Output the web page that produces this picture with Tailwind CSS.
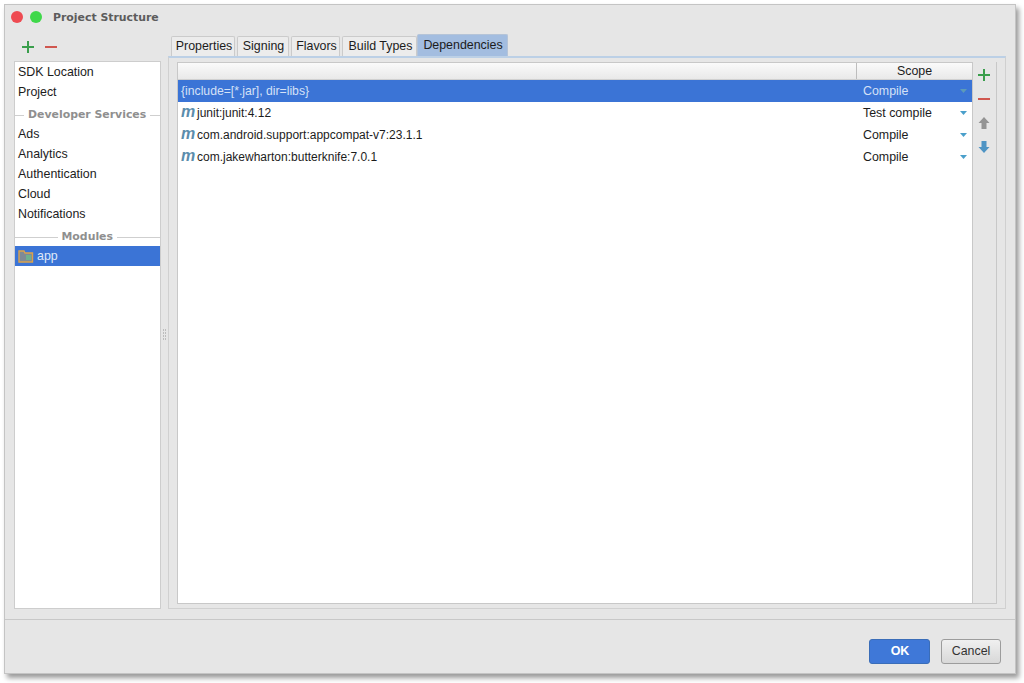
<html>
  <head>
    <meta charset="utf-8" />
    <script src="https://cdn.jsdelivr.net/npm/@tailwindcss/browser@4"></script>
  </head>
  <body class="bg-white font-['Liberation_Sans',sans-serif] text-[12.4px] text-[#1c1c1c] overflow-hidden">
    <div class="ml-[4px] mt-[4px] w-[1012px] h-[670px] flex flex-col bg-[#e6e6e6] border border-[#c4c4c4] shadow-[3px_4px_5px_rgba(0,0,0,0.4)]">
      <!-- title bar -->
      <div class="h-[23px] flex items-center pl-[6px] shrink-0">
        <div class="w-[12px] h-[12px] rounded-full bg-[#ee4b52]"></div>
        <div class="w-[12px] h-[12px] rounded-full bg-[#3fd84a] ml-[7px]"></div>
        <div class="ml-[11px] mt-[3px] font-['DejaVu_Sans',sans-serif] font-bold text-[10.9px] text-[#5c5c5c]">Project Structure</div>
      </div>

      <div class="flex flex-1 min-h-0 border-b border-[#c8c8c8]">
        <!-- left column -->
        <div class="w-[156px] pl-[9px] shrink-0 flex flex-col">
          <div class="h-[33px] flex items-center pl-[7px] gap-[9px] shrink-0 pt-[4px]">
            <svg width="14" height="14" viewBox="0 0 14 14"><path d="M7 1v12M1 7h12" stroke="#3a9e4c" stroke-width="2" /></svg>
            <svg width="14" height="14" viewBox="0 0 14 14"><path d="M1 7h12" stroke="#d0574f" stroke-width="2" /></svg>
          </div>
          <div class="w-[147px] h-[548px] bg-white border border-[#cdcdcd] flex flex-col pt-[0px]">
            <div class="h-[20px] flex items-center pl-[3px]">SDK Location</div>
            <div class="h-[20px] flex items-center pl-[3px]">Project</div>
            <div class="h-[22px] flex items-center gap-[2px] pt-[4px]">
              <div class="w-[9px] h-[1px] bg-[#cfcfcf]"></div>
              <div class="px-[2px] font-['DejaVu_Sans',sans-serif] font-bold text-[10.9px] text-[#8f8f8f] whitespace-nowrap">Developer Services</div>
              <div class="flex-1 h-[1px] bg-[#cfcfcf]"></div>
            </div>
            <div class="h-[20px] flex items-center pl-[3px]">Ads</div>
            <div class="h-[20px] flex items-center pl-[3px]">Analytics</div>
            <div class="h-[20px] flex items-center pl-[3px]">Authentication</div>
            <div class="h-[20px] flex items-center pl-[3px]">Cloud</div>
            <div class="h-[20px] flex items-center pl-[3px]">Notifications</div>
            <div class="h-[22px] flex items-center gap-[2px] pt-[5px]">
              <div class="flex-1 h-[1px] bg-[#cfcfcf]"></div>
              <div class="px-[2px] font-['DejaVu_Sans',sans-serif] font-bold text-[10.9px] text-[#8f8f8f]">Modules</div>
              <div class="w-[43px] h-[1px] bg-[#cfcfcf]"></div>
            </div>
            <div class="h-[20px] flex items-center pl-[3px] bg-[#3b74d6] text-[#dfe8f8]">
              <svg width="16" height="14" viewBox="0 0 16 14" class="mr-[3px]">
                <path d="M1 2h5l1 2h7.500v9H1z" fill="#7f8a96" stroke="#dba24c" stroke-width="1.400" />
                <rect x="8" y="6" width="5" height="5" fill="#6fb08f" />
              </svg>
              app
            </div>
          </div>
        </div>

        <!-- splitter -->
        <div class="w-[7px] shrink-0 flex items-center justify-center">
          <div class="grid grid-cols-2 gap-[1px] mt-[22px]">
            <div class="w-[1px] h-[2px] bg-[#bcbcbc]"></div><div class="w-[1px] h-[2px] bg-[#bcbcbc]"></div>
            <div class="w-[1px] h-[2px] bg-[#bcbcbc]"></div><div class="w-[1px] h-[2px] bg-[#bcbcbc]"></div>
            <div class="w-[1px] h-[2px] bg-[#bcbcbc]"></div><div class="w-[1px] h-[2px] bg-[#bcbcbc]"></div>
            <div class="w-[1px] h-[2px] bg-[#bcbcbc]"></div><div class="w-[1px] h-[2px] bg-[#bcbcbc]"></div>
          </div>
        </div>

        <!-- right column -->
        <div class="w-[838px] shrink-0 flex flex-col pt-[6px]">
          <div class="h-[22px] flex items-end pl-[3px] shrink-0">
            <div class="w-[64px] h-[20px] pl-[2px] bg-[#ececec] border border-b-0 border-[#cbcbcb] rounded-t-[2px] flex items-center justify-center">Properties</div>
            <div class="w-[52px] h-[20px] pl-[1px] ml-[2px] bg-[#ececec] border border-b-0 border-[#cbcbcb] rounded-t-[2px] flex items-center justify-center">Signing</div>
            <div class="w-[49px] h-[20px] pl-[2px] ml-[2px] bg-[#ececec] border border-b-0 border-[#cbcbcb] rounded-t-[2px] flex items-center justify-center">Flavors</div>
            <div class="w-[75px] h-[20px] pl-[2px] ml-[2px] bg-[#ececec] border border-b-0 border-[#cbcbcb] rounded-t-[2px] flex items-center justify-center">Build Types</div>
            <div class="w-[91px] h-[22px] pl-[1px] pb-[1px] bg-[#a3bde0] border border-b-0 border-[#b5c4d8] rounded-t-[2px] flex items-center justify-center">Dependencies</div>
          </div>
          <div class="w-[838px] h-[553px] border border-[#d0d0d0] border-t-2 border-t-[#bcd0e6] pl-[8px] pt-[4px] flex flex-col">
            <div class="w-[820px] h-[542px] flex border border-[#c8c8c8] border-l-0 border-t-0">
              <!-- table -->
              <div class="w-[796px] h-[541px] bg-white border border-[#c8c8c8] border-b-0 flex flex-col shrink-0">
                <div class="h-[17px] flex shrink-0 bg-gradient-to-b from-[#fafafa] to-[#e9e9e9] border-b border-[#d0d0d0]">
                  <div class="w-[679px] border-r border-[#bdbdbd]"></div>
                  <div class="flex-1 flex items-center justify-center">Scope</div>
                </div>
                <div class="h-[22px] flex items-center bg-[#3b74d6] text-[#d5e1f6]">
                  <div class="w-[679px] pl-[3px] text-[12.2px]">{include=[*.jar], dir=libs}</div>
                  <div class="pl-[6px] flex-1">Compile</div>
                  <svg width="7" height="4" viewBox="0 0 7 4" class="mr-[5px]"><path d="M0 0h7L3.500 4z" fill="#5d9ab8" /></svg>
                </div>
                <div class="h-[22px] flex items-center">
                  <div class="w-[679px] pl-[3px] flex items-center text-[12px]">
                    <span class="italic font-bold text-[16px] leading-none text-[#5b8dac] w-[16px] -mt-[3px]">m</span>
                    <span>junit:junit:4.12</span>
                  </div>
                  <div class="pl-[6px] flex-1">Test compile</div>
                  <svg width="7" height="4" viewBox="0 0 7 4" class="mr-[5px]"><path d="M0 0h7L3.500 4z" fill="#4a9fcb" /></svg>
                </div>
                <div class="h-[22px] flex items-center">
                  <div class="w-[679px] pl-[3px] flex items-center text-[12px]">
                    <span class="italic font-bold text-[16px] leading-none text-[#5b8dac] w-[16px] -mt-[3px]">m</span>
                    <span>com.android.support:appcompat-v7:23.1.1</span>
                  </div>
                  <div class="pl-[6px] flex-1">Compile</div>
                  <svg width="7" height="4" viewBox="0 0 7 4" class="mr-[5px]"><path d="M0 0h7L3.500 4z" fill="#4a9fcb" /></svg>
                </div>
                <div class="h-[22px] flex items-center">
                  <div class="w-[679px] pl-[3px] flex items-center text-[12px]">
                    <span class="italic font-bold text-[16px] leading-none text-[#5b8dac] w-[16px] -mt-[3px]">m</span>
                    <span>com.jakewharton:butterknife:7.0.1</span>
                  </div>
                  <div class="pl-[6px] flex-1">Compile</div>
                  <svg width="7" height="4" viewBox="0 0 7 4" class="mr-[5px]"><path d="M0 0h7L3.500 4z" fill="#4a9fcb" /></svg>
                </div>
              </div>
              <!-- toolbar -->
              <div class="flex-1 flex flex-col items-center pt-[6px] pr-[1px] gap-[10px]">
                <svg width="14" height="14" viewBox="0 0 14 14"><path d="M7 1v12M1 7h12" stroke="#3a9e4c" stroke-width="2" /></svg>
                <svg width="14" height="14" viewBox="0 0 14 14"><path d="M1 7h12" stroke="#d0574f" stroke-width="2" /></svg>
                <svg width="14" height="14" viewBox="0 0 14 14"><path d="M7 1l5.500 6H9.500v6h-5V7H1.500z" fill="#949494" /></svg>
                <svg width="14" height="14" viewBox="0 0 14 14"><path d="M7 13l5.500-6H9.500V1h-5v6H1.500z" fill="#4f94c4" /></svg>
              </div>
            </div>
          </div>
        </div>
      </div>

      <!-- footer -->
      <div class="h-[53px] shrink-0 flex items-start justify-end pt-[19px] pr-[14px]">
        <button class="w-[61px] h-[25px] pl-[1px] rounded-[3px] bg-[#3f78d8] border border-[#3a6db8] text-white font-bold text-[12.5px]">OK</button>
        <button class="w-[60px] h-[25px] ml-[11px] rounded-[3px] bg-gradient-to-b from-[#f0f0f0] to-[#d8d8d8] border border-[#9c9c9c] text-[#333]">Cancel</button>
      </div>
    </div>
  </body>
</html>
